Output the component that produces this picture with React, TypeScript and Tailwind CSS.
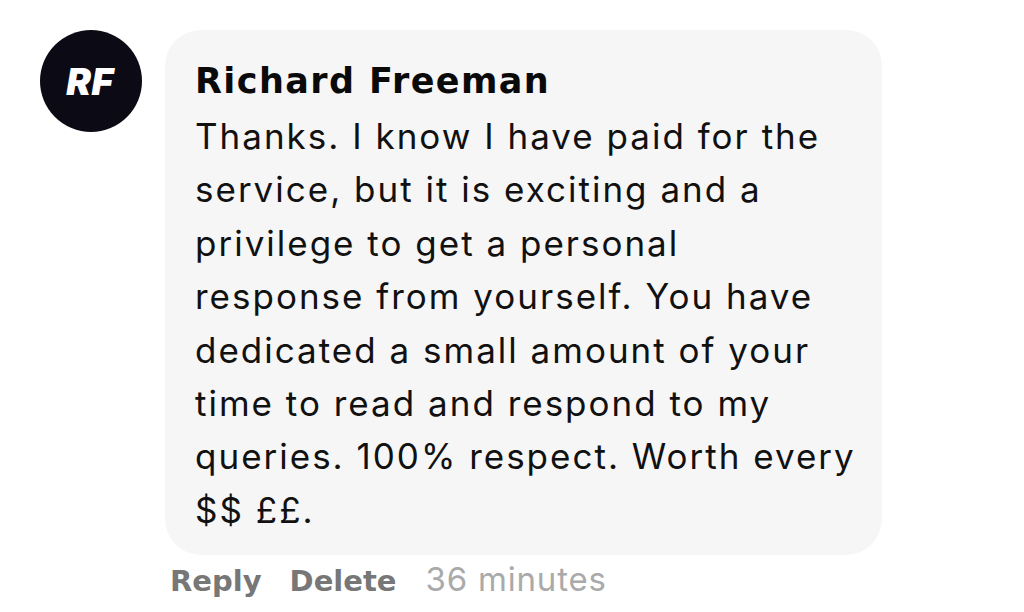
import React from "react";

const lines = [
  "Thanks. I know I have paid for the",
  "service, but it is exciting and a",
  "privilege to get a personal",
  "response from yourself. You have",
  "dedicated a small amount of your",
  "time to read and respond to my",
  "queries. 100% respect. Worth every",
  "$$ ££.",
];

export default function App() {
  return (
    <div className="w-[1024px] h-[612px] bg-white overflow-hidden flex flex-col pl-[40px] pt-[30px] font-['Inter',sans-serif]">
      <div className="flex items-start gap-[23px]">
        <div className="w-[102px] h-[102px] shrink-0 rounded-full bg-[#0c0a14] flex items-center justify-center">
          <span className="text-white italic font-black text-[37px] leading-none tracking-[0.5px] pr-[2px]">RF</span>
        </div>
        <div className="w-[717px] h-[525px] rounded-[36px] bg-[#f6f6f6] pl-[30px] pt-[29px]">
          <div className="font-['DejaVu_Sans',sans-serif] font-bold text-[35px] leading-[44px] tracking-[1.4px] text-[#0a0a0a]">
            Richard Freeman
          </div>
          <div className="mt-[7px] text-[35px] leading-[53.4px] tracking-[2px] text-[#111111]">
            {lines.map((l) => (
              <div key={l} className="whitespace-nowrap">{l}</div>
            ))}
          </div>
        </div>
      </div>
      <div className="flex items-baseline pl-[130px] mt-[4px] leading-[40px] whitespace-nowrap">
        <span className="font-['DejaVu_Sans',sans-serif] font-bold text-[29px] text-[#777777]">Reply</span>
        <span className="ml-[28px] font-['DejaVu_Sans',sans-serif] font-bold text-[29px] text-[#777777]">Delete</span>
        <span className="ml-[29px] text-[33px] tracking-[0.8px] text-[#aaaaaa]">36 minutes</span>
      </div>
    </div>
  );
}
